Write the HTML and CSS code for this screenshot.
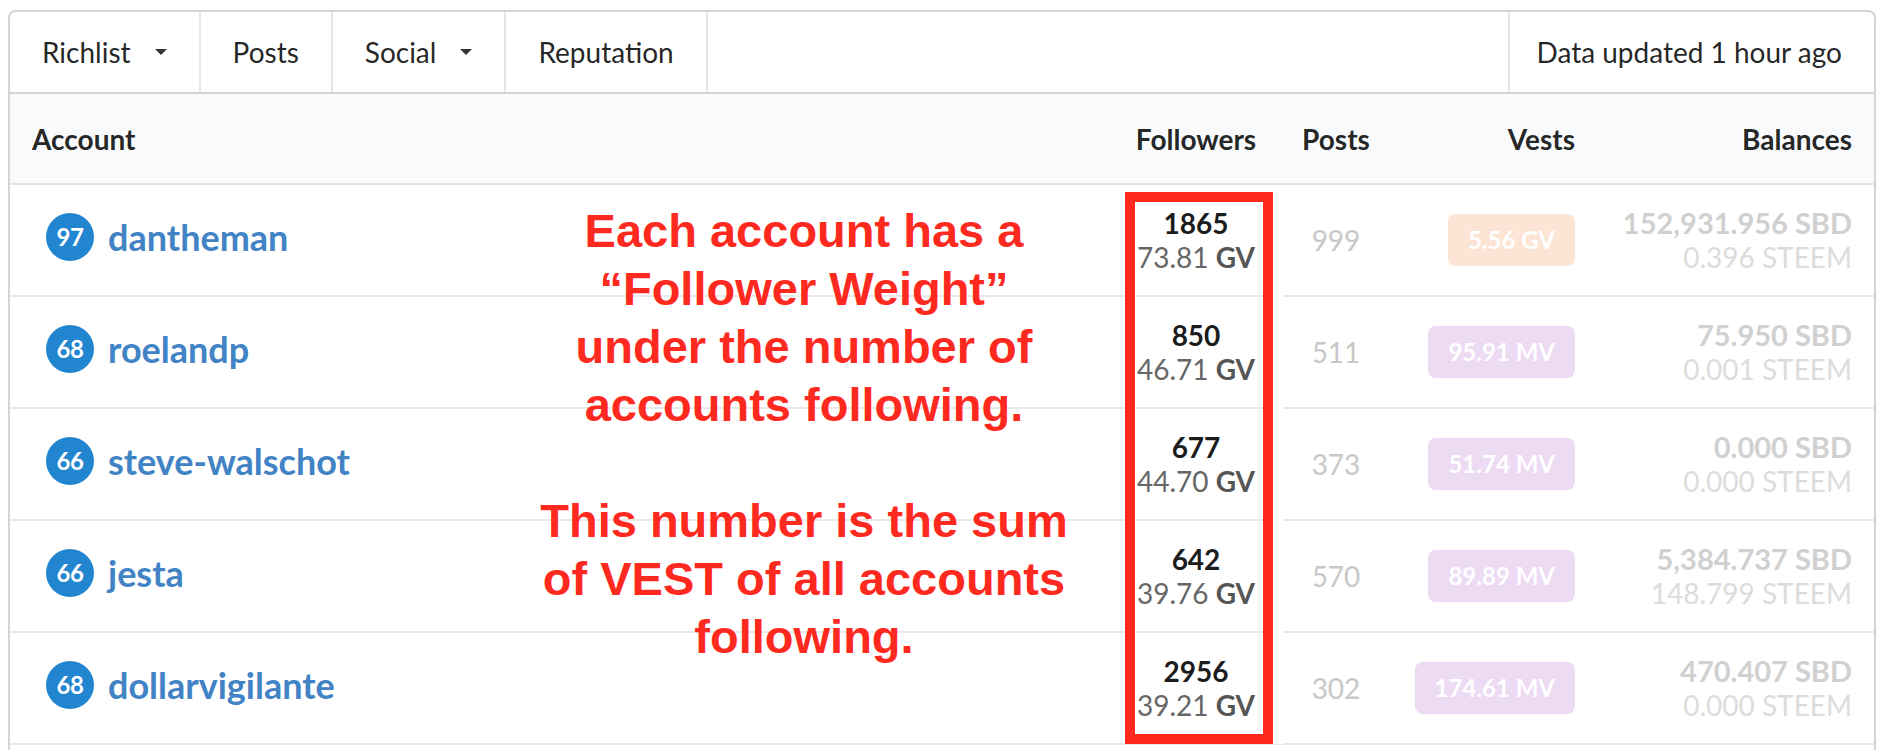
FILE: index.html
```html
<!DOCTYPE html>
<html>
<head>
<meta charset="utf-8">
<link rel="stylesheet" href="styles.css">
</head>
<body>
<div class="card">
  <nav class="menu">
    <div class="item">Richlist <span class="caret"></span></div>
    <div class="item">Posts</div>
    <div class="item">Social <span class="caret"></span></div>
    <div class="item">Reputation</div>
    <div class="item right">Data updated 1 hour ago</div>
  </nav>
  <table class="table">
    <colgroup>
      <col class="c-account"><col class="c-followers"><col class="c-posts"><col class="c-vests"><col class="c-balances">
    </colgroup>
    <thead>
      <tr>
        <th class="left">Account</th>
        <th class="center">Followers</th>
        <th class="center">Posts</th>
        <th class="right">Vests</th>
        <th class="right">Balances</th>
      </tr>
    </thead>
    <tbody>
      <tr>
        <td class="account"><span class="rep">97</span><a class="name">dantheman</a></td>
        <td class="center"><div class="num">1865</div><div class="weight">73.81 <b>GV</b></div></td>
        <td class="center posts">999</td>
        <td class="right"><span class="vest orange">5.56 GV</span></td>
        <td class="right bal"><div class="sbd">152,931.956 SBD</div><div class="steem">0.396 STEEM</div></td>
      </tr>
      <tr>
        <td class="account"><span class="rep">68</span><a class="name">roelandp</a></td>
        <td class="center"><div class="num">850</div><div class="weight">46.71 <b>GV</b></div></td>
        <td class="center posts">511</td>
        <td class="right"><span class="vest purple">95.91 MV</span></td>
        <td class="right bal"><div class="sbd">75.950 SBD</div><div class="steem">0.001 STEEM</div></td>
      </tr>
      <tr>
        <td class="account"><span class="rep">66</span><a class="name">steve-walschot</a></td>
        <td class="center"><div class="num">677</div><div class="weight">44.70 <b>GV</b></div></td>
        <td class="center posts">373</td>
        <td class="right"><span class="vest purple">51.74 MV</span></td>
        <td class="right bal"><div class="sbd">0.000 SBD</div><div class="steem">0.000 STEEM</div></td>
      </tr>
      <tr>
        <td class="account"><span class="rep">66</span><a class="name">jesta</a></td>
        <td class="center"><div class="num">642</div><div class="weight">39.76 <b>GV</b></div></td>
        <td class="center posts">570</td>
        <td class="right"><span class="vest purple">89.89 MV</span></td>
        <td class="right bal"><div class="sbd">5,384.737 SBD</div><div class="steem">148.799 STEEM</div></td>
      </tr>
      <tr>
        <td class="account"><span class="rep">68</span><a class="name">dollarvigilante</a></td>
        <td class="center"><div class="num">2956</div><div class="weight">39.21 <b>GV</b></div></td>
        <td class="center posts">302</td>
        <td class="right"><span class="vest purple">174.61 MV</span></td>
        <td class="right bal"><div class="sbd">470.407 SBD</div><div class="steem">0.000 STEEM</div></td>
      </tr>
    </tbody>
  </table>
  <div class="highlight"></div>
  <div class="note">
    <p>Each account has a<br>“Follower Weight”<br>under the number of<br>accounts following.</p>
    <p>This number is the sum<br>of VEST of all accounts<br>following.</p>
  </div>
</div>
</body>
</html>
```
FILE: styles.css
```css
html, body {
  margin: 0;
  padding: 0;
  background: #ffffff;
}
body {
  font-family: Lato, "Open Sans", sans-serif;
  color: rgba(0, 0, 0, 0.87);
}
.card {
  position: relative;
  margin: 10px 12px 0 8px;
  min-height: 900px;
  border: 2px solid #d4d4d5;
  border-radius: 8px;
  background: #fff;
}
.menu {
  display: flex;
  height: 80px;
  border-bottom: 2px solid #d4d4d5;
}
.menu .item {
  display: flex;
  align-items: center;
  padding: 0 32px;
  font-size: 28px;
  color: rgba(0, 0, 0, 0.87);
  border-right: 2px solid #e6e6e7;
}
.menu .item.right {
  margin-left: auto;
  border-right: none;
  border-left: 2px solid #e6e6e7;
  padding: 0 32px 0 26px;
}
.caret {
  display: inline-block;
  width: 0;
  height: 0;
  margin-left: 24px;
  border-left: 6px solid transparent;
  border-right: 6px solid transparent;
  border-top: 6px solid #333;
}
.table {
  width: 100%;
  border-collapse: collapse;
  table-layout: fixed;
  font-size: 28px;
}
.c-account { width: 1102px; }
.c-followers { width: 168px; }
.c-posts { width: 112px; }
.c-vests { width: 205px; }
.c-balances { width: 277px; }
.table th {
  background: #f9fafb;
  font-weight: 700;
  line-height: 40px;
  padding: 25px 22px 24px;
  border-bottom: 2px solid #e3e4e5;
  white-space: nowrap;
}
.table td {
  height: 110px;
  padding: 0 22px;
  border-bottom: 2px solid #e9e9ea;
  vertical-align: middle;
  line-height: 34px;
  white-space: nowrap;
}
.left { text-align: left; }
.center { text-align: center; }
.right { text-align: right; }
.table td.account {
  padding-left: 36px;
}
.rep {
  display: inline-block;
  width: 48px;
  height: 48px;
  line-height: 48px;
  border-radius: 50%;
  background: #2185d0;
  color: #fff;
  font-size: 24px;
  font-weight: 700;
  text-align: center;
  vertical-align: middle;
  margin-right: 14px;
  letter-spacing: -0.5px;
  position: relative;
  top: -3px;
}
.name {
  font-size: 36px;
  font-weight: 700;
  color: #4183c4;
  vertical-align: middle;
  position: relative;
  top: -3px;
}
.num {
  font-weight: 700;
  color: #1b1c1d;
}
.weight {
  color: #666;
}
.weight b {
  font-weight: 700;
  color: #555;
}
.posts {
  color: #c8c8c8;
}
.vest {
  display: inline-block;
  padding: 14px 20px;
  font-size: 24px;
  line-height: 24px;
  font-weight: 700;
  color: #fff;
  border-radius: 8px;
}
.vest.orange { background: #fce5d5; }
.vest.purple { background: #ecdbf3; }
.bal .sbd {
  font-weight: 700;
  color: #d0d0d0;
  font-size: 29px;
}
.bal .steem {
  color: #dcdcdc;
}
.highlight {
  position: absolute;
  left: 1115px;
  top: 180px;
  width: 128px;
  height: 532px;
  border: 10px solid #ff2a1f;
  box-shadow: 10px 0 0 #fff;
}
.note {
  position: absolute;
  left: 444px;
  top: 190px;
  width: 700px;
  text-align: center;
  font-family: "Liberation Sans", Arial, sans-serif;
  font-weight: 700;
  font-size: 47px;
  line-height: 58px;
  color: #ff2a1f;
}
.note p {
  margin: 0 0 58px;
}
```
